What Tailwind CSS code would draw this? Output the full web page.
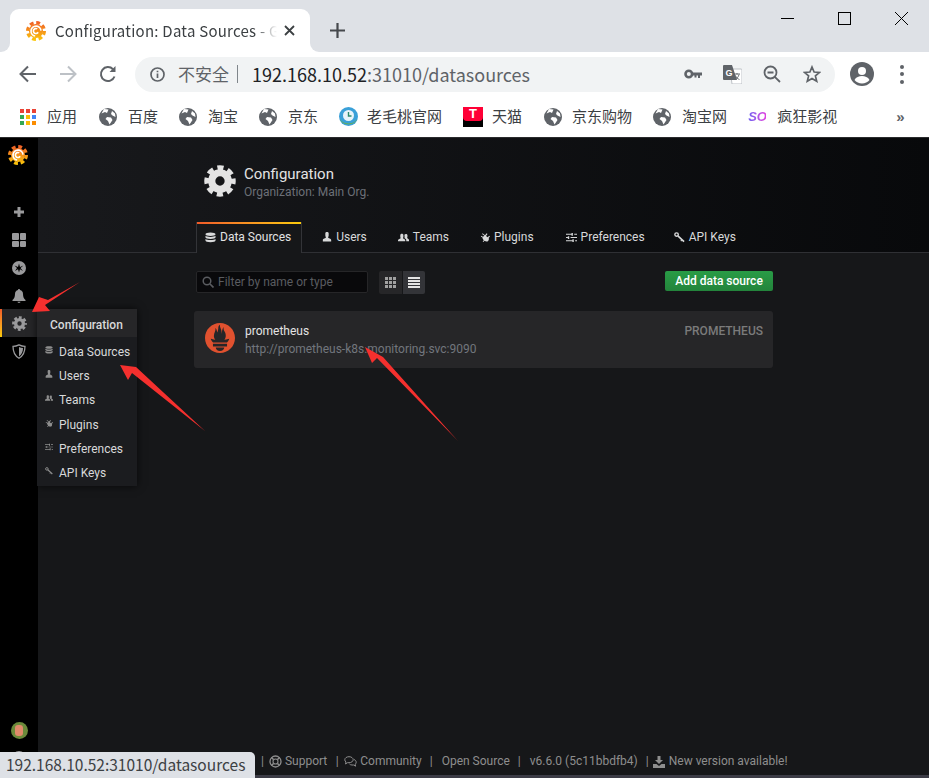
<!DOCTYPE html>
<html lang="zh-CN">
<head>
  <meta charset="UTF-8">
  <title>Configuration: Data Sources - Grafana</title>
  <script src="https://cdn.jsdelivr.net/npm/@tailwindcss/browser@4"></script>
</head>
<body class="relative h-screen overflow-hidden bg-white font-['Noto_Sans_CJK_SC',sans-serif]">
  <!-- shared icons -->
  <svg class="absolute h-0 w-0">
    <defs>
      <linearGradient id="gf" gradientUnits="userSpaceOnUse" x1="12" y1="0" x2="12" y2="24"><stop offset="0" stop-color="#f05a28"/><stop offset="1" stop-color="#fbca0a"/></linearGradient>
    </defs>
    <symbol id="grafana" viewBox="0 0 24 24">
      <circle cx="12" cy="12" r="8.5" fill="url(#gf)"/>
      <circle cx="12" cy="12" r="10" fill="none" stroke="url(#gf)" stroke-width="4" stroke-dasharray="4.6 3.25"/>
      <path d="M11 18a6 6 0 1 1 7-6.5M14.5 13.500a3 3 0 1 1-1-4" fill="none" stroke="#fff" stroke-width="2"/>
    </symbol>
    <symbol id="globe" viewBox="0 0 18 18">
      <circle cx="9" cy="9" r="9" fill="#5f6368"/>
      <path d="M2.500 5.500 6 4l2 1 1.500-3.500L5 1zM8 9l4 .5 1.500 2.500-3 4.500L9 13 6.500 11zM13 3l3 2.500.5 3.500L13.500 7.500 12 6z" fill="#fff"/>
    </symbol>
    <symbol id="gear" viewBox="0 0 24 24">
      <circle cx="12" cy="12" r="6.200" fill="none" stroke="currentColor" stroke-width="5.400"/>
      <circle cx="12" cy="12" r="9.800" fill="none" stroke="currentColor" stroke-width="4" stroke-dasharray="4.500 3.200" stroke-dashoffset="2.250"/>
    </symbol>
    <symbol id="db" viewBox="0 0 12 12">
      <path d="M6 .5c3 0 5.500.8 5.500 1.900S9 4.300 6 4.300.5 3.500.5 2.400 3 .5 6 .5zM.5 4.200C1.500 5 3.500 5.400 6 5.400s4.500-.4 5.500-1.200v1.500C11.500 6.800 9 7.600 6 7.600S.5 6.800.5 5.700zM.5 7.500C1.500 8.300 3.500 8.700 6 8.700s4.500-.4 5.500-1.200v1.700c0 1.100-2.500 1.900-5.500 1.900S.5 10.300.5 9.200z" fill="currentColor"/>
    </symbol>
    <symbol id="user" viewBox="0 0 12 12">
      <path d="M4 1.500C4 .6 5 0 6 0s2 .6 2 1.500v2.700C8 5 7.500 5.700 7.300 6.500c0 .8 3.700 1 3.700 3V11.500H1V9.500c0-2 3.700-2.200 3.700-3C4.500 5.700 4 5 4 4.200z" fill="currentColor"/>
    </symbol>
    <symbol id="users" viewBox="0 0 12 12">
      <path d="M2.500 3.500C2.500 2.700 3.200 2 4.200 2s1.700.7 1.700 1.500V5.200c0 .6-.4 1.100-.5 1.600 0 .5 2.500.8 2.500 2.200V10H0V9C0 7.600 2.900 7.300 2.900 6.800 2.800 6.300 2.500 5.800 2.500 5.200z" fill="currentColor"/>
      <path d="M7 3c.3-.5.9-.9 1.700-.9 1 0 1.600.7 1.600 1.500v1.500c0 .6-.3 1-.4 1.500 0 .5 2.100.8 2.100 2V10H9V8.800C9 7.800 8 7.200 7.200 6.900 7.100 6.500 7.200 5.800 7.200 5.200z" fill="currentColor"/>
    </symbol>
    <symbol id="plug" viewBox="0 0 12 12">
      <path d="M3 1.500l3 2.300L8 1.500l1 .8-1.800 2.400 2 1.500L11 4.500l1 .8L10.500 7c.4 2 0 3.600-1.500 4.300-1.200.5-2.400.2-3.500-.7L4 12l-.8-.7 1.400-1.500C3.500 8.700 2.900 7.500 3 6.500L1 5.500l.5-1L3.500 5.700 5.300 4.600 2.500 2.300z" fill="currentColor"/>
    </symbol>
    <symbol id="sliders" viewBox="0 0 12 12">
      <path d="M0 2h6V1h1.500v3H6V3H0zM9 2h3v1H9zM0 5.500h2V4.500h1.500v3H2v-1H0zM5 5.500h7v1H5zM0 9h7V8h1.500v3H7v-1H0zM10 9h2v1h-2z" fill="currentColor"/>
    </symbol>
    <symbol id="key" viewBox="0 0 12 12">
      <circle cx="2.800" cy="2.800" r="1.900" fill="none" stroke="currentColor" stroke-width="1.500"/>
      <path d="M4.200 4.200 11 10.500" stroke="currentColor" stroke-width="1.800"/>
      <path d="M8.500 8.500 7.500 10" stroke="currentColor" stroke-width="1.200"/>
    </symbol>
  </svg>

  <!-- chrome: tabs -->
  <div class="flex h-[52px] bg-[#dee1e6]">
    <div class="relative ml-[10px] mt-[9px] flex h-[43px] w-[300px] items-center rounded-t-[9px] bg-white pl-[16px]">
      <span class="absolute bottom-0 -left-[10px] h-[10px] w-[10px] bg-white"></span>
      <span class="absolute bottom-0 -left-[10px] h-[10px] w-[10px] rounded-br-[9px] bg-[#dee1e6]"></span>
      <span class="absolute -right-[10px] bottom-0 h-[10px] w-[10px] bg-white"></span>
      <span class="absolute -right-[10px] bottom-0 h-[10px] w-[10px] rounded-bl-[9px] bg-[#dee1e6]"></span>
      <svg class="h-[20px] w-[20px] shrink-0"><use href="#grafana"/></svg>
      <span class="ml-[9px] w-[222px] overflow-hidden whitespace-nowrap text-[15px] leading-[20px] tracking-[0.25px] text-[#3c4043] [mask-image:linear-gradient(90deg,#000_90%,transparent)]">Configuration: Data Sources - G</span>
      <svg class="ml-[7px] h-[11px] w-[11px]" viewBox="0 0 11 11"><path d="M1 1l9 9M10 1l-9 9" stroke="#3c4043" stroke-width="1.800"/></svg>
    </div>
    <svg class="ml-[20px] mt-[23px] h-[15px] w-[15px]" viewBox="0 0 15 15"><path d="M7.500 0v15M0 7.500h15" stroke="#45484c" stroke-width="2.200"/></svg>
    <div class="-mr-[1px] ml-auto flex h-[36px]">
      <div class="flex w-[57px] items-center justify-center"><span class="block h-px w-[13px] bg-black"></span></div>
      <div class="flex w-[57px] items-center justify-center"><span class="block h-[13px] w-[13px] border border-black"></span></div>
      <div class="flex w-[57px] items-center justify-center"><svg class="h-[13px] w-[13px]" viewBox="0 0 13 13"><path d="M0 0l13 13M13 0L0 13" stroke="#000"/></svg></div>
    </div>
  </div>

  <!-- chrome: toolbar -->
  <div class="flex h-[44px] items-center bg-white pl-[8px]">
    <div class="flex w-[40px] justify-center"><svg class="h-[18px] w-[18px]" viewBox="0 0 18 18"><path d="M17 9H2M9 1.500 1.500 9 9 16.500" fill="none" stroke="#5f6368" stroke-width="2"/></svg></div>
    <div class="flex w-[40px] justify-center"><svg class="h-[18px] w-[18px]" viewBox="0 0 18 18"><path d="M1 9h15M9 1.500 16.500 9 9 16.500" fill="none" stroke="#bdc1c6" stroke-width="2"/></svg></div>
    <div class="flex w-[40px] justify-center"><svg class="h-[18px] w-[18px]" viewBox="0 0 18 18"><path d="M15.500 11.500A7 7 0 1 1 14 4.200" fill="none" stroke="#5f6368" stroke-width="2"/><path d="M16.500 1v6h-6z" fill="#5f6368"/></svg></div>
    <div class="ml-[7px] flex h-[35px] w-[700px] items-center rounded-full bg-[#f1f3f4] pl-[15px]">
      <svg class="h-[15px] w-[15px] shrink-0" viewBox="0 0 15 15"><circle cx="7.500" cy="7.500" r="6.500" fill="none" stroke="#5f6368" stroke-width="1.700"/><path d="M7.500 6.500v4.500M7.500 3.800v1.500" stroke="#5f6368" stroke-width="1.700"/></svg>
      <span class="ml-[13px] text-[17px] text-[#5f6368]">不安全</span>
      <span class="ml-[8px] h-[18px] w-px bg-[#80868b]"></span>
      <span class="ml-[14px] whitespace-nowrap text-[18px] text-[#5f6368]"><span class="text-[#202124]">192.168.10.52</span>:31010/datasources</span>
      <div class="ml-auto flex items-center">
        <svg class="h-[12px] w-[18px]" viewBox="0 0 18 12"><circle cx="4.800" cy="6" r="3.300" fill="none" stroke="#5f6368" stroke-width="2.600"/><path d="M8 4.500h10v3h-2v2.500h-2V7.500h-1.500V9.500h-2V7.500H8z" fill="#5f6368"/></svg>
        <svg class="ml-[21px] h-[19px] w-[19px]" viewBox="0 0 19 19"><path d="M7 4h11a1 1 0 0 1 1 1v13a1 1 0 0 1-1 1H9z" fill="#fff" stroke="#bdc1c6"/><path d="M1 0h8l5 15H1a1 1 0 0 1-1-1V1a1 1 0 0 1 1-1z" fill="#5f6368"/><text x="2.500" y="11" font-size="9" font-weight="700" fill="#fff" font-family="Liberation Sans">G</text><path d="M11 9h6M14 8v1.500M16 9.500c-.5 2.500-2 4-4 5M12.500 10.500c.7 2 2 3.300 4 4" fill="none" stroke="#5f6368" stroke-width=".9"/></svg>
        <svg class="ml-[21px] h-[18px] w-[18px]" viewBox="0 0 18 18"><circle cx="7.500" cy="7.500" r="6" fill="none" stroke="#5f6368" stroke-width="1.800"/><path d="M11.800 11.800 17 17M4.500 7.500h6" stroke="#5f6368" stroke-width="1.800"/></svg>
        <svg class="ml-[22px] mr-[14px] h-[18px] w-[18px]" viewBox="0 0 18 18"><path d="M9 2l2.100 5 5.400.400-4.100 3.500 1.300 5.300L9 13.400 4.300 16.200l1.300-5.300L1.500 7.400 6.900 7z" fill="none" stroke="#5f6368" stroke-width="1.700"/></svg>
      </div>
    </div>
    <div class="ml-[15px] flex w-[24px] justify-center"><svg class="h-[24px] w-[24px]" viewBox="0 0 24 24"><circle cx="12" cy="12" r="12" fill="#5f6368"/><circle cx="12" cy="9" r="4" fill="#fff"/><path d="M4.500 18c1.500-3 4.500-4 7.500-4s6 1 7.500 4c-1.800 2.200-4.500 3.500-7.500 3.500S6.300 20.200 4.500 18z" fill="#fff"/></svg></div>
    <div class="ml-[20px] flex w-[16px] flex-col items-center gap-[3.500px]"><span class="h-[4px] w-[4px] rounded-full bg-[#5f6368]"></span><span class="h-[4px] w-[4px] rounded-full bg-[#5f6368]"></span><span class="h-[4px] w-[4px] rounded-full bg-[#5f6368]"></span></div>
  </div>

  <!-- chrome: bookmarks -->
  <div class="flex h-[42px] items-center gap-[21px] border-b border-[#2a2b2d] bg-white pl-[20px] text-[15px] text-[#3c4043]">
    <div class="flex items-center gap-[11px]">
      <div class="grid h-[16px] w-[16px] grid-cols-3 gap-[2px]">
        <span class="bg-[#ea4335]"></span><span class="bg-[#ea4335]"></span><span class="bg-[#ea4335]"></span>
        <span class="bg-[#34a853]"></span><span class="bg-[#fbbc05]"></span><span class="bg-[#4285f4]"></span>
        <span class="bg-[#34a853]"></span><span class="bg-[#fbbc05]"></span><span class="bg-[#fb8c00]"></span>
      </div>
      <span>应用</span>
    </div>
    <div class="ml-[1px] flex items-center gap-[11px]"><svg class="h-[18px] w-[18px]"><use href="#globe"/></svg><span>百度</span></div>
    <div class="flex items-center gap-[11px]"><svg class="h-[18px] w-[18px]"><use href="#globe"/></svg><span>淘宝</span></div>
    <div class="flex items-center gap-[11px]"><svg class="h-[18px] w-[18px]"><use href="#globe"/></svg><span>京东</span></div>
    <div class="flex items-center gap-[9px]">
      <svg class="h-[19px] w-[19px]" viewBox="0 0 19 19"><circle cx="9.500" cy="9.500" r="9.500" fill="#3aa0d8"/><path d="M1 12c3 6 14 6 17 0-2 7-15 7-17 0z" fill="#6cb33f"/><circle cx="9.500" cy="8.500" r="5.500" fill="#e8f4fa"/><path d="M9.500 5v4h3" fill="none" stroke="#2a8a6a" stroke-width="1.400"/></svg>
      <span>老毛桃官网</span>
    </div>
    <div class="flex items-center gap-[9px]">
      <div class="flex h-[20px] w-[20px] flex-col bg-black"><span class="flex h-[14px] items-center justify-center rounded-b-[4px] bg-[#ff0036] font-['Liberation_Sans',sans-serif] text-[13px] leading-none font-bold text-white">T</span></div>
      <span>天猫</span>
    </div>
    <div class="ml-[1px] flex items-center gap-[10px]"><svg class="h-[18px] w-[18px]"><use href="#globe"/></svg><span>京东购物</span></div>
    <div class="flex items-center gap-[11px]"><svg class="h-[18px] w-[18px]"><use href="#globe"/></svg><span>淘宝网</span></div>
    <div class="flex items-center gap-[11px]">
      <span class="w-[18px] bg-linear-to-r from-[#6a5cf0] to-[#e040e0] bg-clip-text font-['Liberation_Sans',sans-serif] text-[13px] font-bold text-transparent italic">SO</span>
      <span>疯狂影视</span>
    </div>
    <span class="ml-[38px] font-['Liberation_Sans',sans-serif] text-[15px] leading-none font-bold text-[#5f6368]">»</span>
  </div>

  <!-- grafana -->
  <div class="flex h-[640px] font-['Roboto',sans-serif] text-[12px]">
    <aside class="relative z-10 flex w-[38px] shrink-0 flex-col bg-black text-[#9a9a9c]">
      <div class="flex h-[60px] justify-center pt-[7px] pr-[2px]"><svg class="h-[20px] w-[20px]"><use href="#grafana"/></svg></div>
      <div class="flex h-[28px] items-center justify-center"><svg class="h-[12px] w-[12px]" viewBox="0 0 12 12"><path d="M6 1v10M1 6h10" stroke="currentColor" stroke-width="3"/></svg></div>
      <div class="flex h-[28px] items-center justify-center"><div class="grid h-[14px] w-[14px] grid-cols-2 gap-[1px]"><span class="rounded-[1px] bg-current"></span><span class="rounded-[1px] bg-current"></span><span class="rounded-[1px] bg-current"></span><span class="rounded-[1px] bg-current"></span></div></div>
      <div class="flex h-[28px] items-center justify-center"><svg class="h-[14px] w-[14px]" viewBox="0 0 14 14"><circle cx="7" cy="7" r="7" fill="currentColor"/><path d="M7 2.500 8 6l3.500-1.500L8.500 7l2.500 3L8 8.300 7 11.500 6 8.300 3 10l2-3L2.500 4.500 6 6z" fill="#000"/></svg></div>
      <div class="flex h-[28px] items-center justify-center"><svg class="h-[14px] w-[14px]" viewBox="0 0 14 14"><path d="M7 0c.7 0 1 .5 1 1 2 .5 3 2 3 4 0 3 1 5 2.500 6v1H.5v-1C2 10 3 8 3 5c0-2 1-3.500 3-4 0-.5.300-1 1-1zM5.500 12.800h3C8.500 13.500 7.800 14 7 14s-1.500-.5-1.500-1.200z" fill="currentColor"/></svg></div>
      <div class="relative -mt-[1px] flex h-[28px] items-center justify-center bg-[#262628]">
        <span class="absolute inset-y-0 left-0 w-[2px] bg-linear-to-b from-[#f05a28] to-[#fbca0a]"></span>
        <svg class="h-[15px] w-[15px]"><use href="#gear"/></svg>
        <!-- flyout -->
        <div class="absolute top-0 left-[37px] w-[100px] bg-[#1b1c1f] pb-[1px] text-[#d8d9da] shadow-[0_0_8px_rgba(0,0,0,.7)]">
          <div class="flex h-[28px] items-center bg-[#262628] pl-[13px] pt-[3px] font-medium">Configuration</div>
          <div class="mt-[2.500px] flex h-[24.300px] items-center pl-[8px]"><svg class="mb-[4px] h-[8px] w-[8px] text-[#8e8e8e]"><use href="#db"/></svg><span class="ml-[6px]">Data Sources</span></div>
          <div class="flex h-[24.300px] items-center pl-[8px]"><svg class="mb-[4px] h-[8px] w-[8px] text-[#8e8e8e]"><use href="#user"/></svg><span class="ml-[6px]">Users</span></div>
          <div class="flex h-[24.300px] items-center pl-[8px]"><svg class="mb-[4px] h-[8px] w-[8px] text-[#8e8e8e]"><use href="#users"/></svg><span class="ml-[6px]">Teams</span></div>
          <div class="flex h-[24.300px] items-center pl-[8px]"><svg class="mb-[4px] h-[8px] w-[8px] text-[#8e8e8e]"><use href="#plug"/></svg><span class="ml-[6px]">Plugins</span></div>
          <div class="flex h-[24.300px] items-center pl-[8px]"><svg class="mb-[4px] h-[8px] w-[8px] text-[#8e8e8e]"><use href="#sliders"/></svg><span class="ml-[6px]">Preferences</span></div>
          <div class="flex h-[24.300px] items-center pl-[8px]"><svg class="mb-[4px] h-[8px] w-[8px] text-[#8e8e8e]"><use href="#key"/></svg><span class="ml-[6px]">API Keys</span></div>
        </div>
      </div>
      <div class="flex h-[28px] items-center justify-center"><svg class="h-[15px] w-[14px]" viewBox="0 0 14 15"><path d="M7 .8C9 1.800 11 2.300 13 2.300c0 5-1.500 9.500-6 11.900C2.500 11.800 1 7.300 1 2.300c2 0 4-.5 6-1.500z" fill="none" stroke="currentColor" stroke-width="1.300"/><path d="M7 3c1.300.6 2.600 1 4 1.100 0 3.500-1.200 6.500-4 8.300z" fill="currentColor"/></svg></div>
      <div class="mt-auto flex justify-center">
        <div class="flex h-[17px] w-[17px] items-center justify-center overflow-hidden rounded-full bg-[#6b8a3a]"><span class="block h-[11px] w-[8px] rounded-[3px] bg-[#e08a6a]"></span></div>
      </div>
      <div class="mt-[12px] mb-[13px] flex justify-center"><span class="block h-[14px] w-[14px] rounded-full bg-[#9a9a9c]"></span></div>
    </aside>

    <main class="flex min-w-0 flex-1 flex-col bg-[#161719]">
      <header class="h-[115px] shrink-0 border-b border-[#2f3034] bg-linear-to-r from-[#18191c] to-[#08090b] pl-[158px]">
        <div class="flex h-[84px] items-center pt-[2px] pl-[8px]">
          <svg class="h-[32px] w-[32px] text-[#e3e3e3]"><use href="#gear"/></svg>
          <div class="ml-[8px] mt-[1px]">
            <h1 class="text-[15px] leading-[20px] text-[#e3e3e3]">Configuration</h1>
            <p class="mt-[1px] text-[12px] leading-[14px] text-[#6c7077]">Organization: Main Org.</p>
          </div>
        </div>
        <nav class="flex h-[31px] items-stretch">
          <a class="flex items-center gap-[4px] border-x border-[#333438] bg-[#161719] bg-linear-to-r from-[#f05a28] to-[#fbca0a] bg-size-[100%_2px] bg-no-repeat pr-[10px] pb-[1px] pl-[8px] text-[#e3e3e3]"><svg class="h-[11px] w-[11px] text-[#d8d9da]"><use href="#db"/></svg>Data Sources</a>
          <a class="ml-[11px] flex items-center gap-[4px] px-[9px] pb-[1px] text-[#d8d9da]"><svg class="h-[10px] w-[10px]"><use href="#user"/></svg>Users</a>
          <a class="ml-[13px] flex items-center gap-[4px] px-[9px] pb-[1px] text-[#d8d9da]"><svg class="h-[11px] w-[11px]"><use href="#users"/></svg>Teams</a>
          <a class="ml-[13px] flex items-center gap-[4px] px-[9px] pb-[1px] text-[#d8d9da]"><svg class="h-[10px] w-[10px]"><use href="#plug"/></svg>Plugins</a>
          <a class="ml-[14px] flex items-center gap-[4px] px-[9px] pb-[1px] text-[#d8d9da]"><svg class="h-[11px] w-[11px]"><use href="#sliders"/></svg>Preferences</a>
          <a class="ml-[11px] flex items-center gap-[4px] px-[9px] pb-[1px] text-[#d8d9da]"><svg class="h-[11px] w-[11px]"><use href="#key"/></svg>API Keys</a>
        </nav>
      </header>

      <div class="flex-1 pr-[156px] pl-[158px]">
        <div class="mt-[18px] flex items-start">
          <div class="flex h-[22px] w-[172px] items-center rounded-[2px] border border-[#262628] bg-[#09090b] pl-[5px] text-[#5a5c60]">
            <svg class="h-[12px] w-[12px]" viewBox="0 0 12 12"><circle cx="5" cy="5" r="3.800" fill="none" stroke="#5a5c60" stroke-width="1.500"/><path d="M8 8l3.500 3.500" stroke="#5a5c60" stroke-width="1.700"/></svg>
            <span class="ml-[4px]">Filter by name or type</span>
          </div>
          <div class="ml-[11px] flex h-[23px] overflow-hidden rounded-[2px]">
            <div class="flex w-[23px] items-center justify-center bg-[#262628]"><div class="grid h-[11px] w-[12px] grid-cols-3 gap-px"><span class="bg-[#a0a0a0]"></span><span class="bg-[#a0a0a0]"></span><span class="bg-[#a0a0a0]"></span><span class="bg-[#a0a0a0]"></span><span class="bg-[#a0a0a0]"></span><span class="bg-[#a0a0a0]"></span><span class="bg-[#a0a0a0]"></span><span class="bg-[#a0a0a0]"></span><span class="bg-[#a0a0a0]"></span></div></div>
            <div class="ml-px flex w-[22px] items-center justify-center bg-[#333438]"><div class="flex h-[11px] w-[12px] flex-col gap-px"><span class="flex-1 bg-[#e3e3e3]"></span><span class="flex-1 bg-[#e3e3e3]"></span><span class="flex-1 bg-[#e3e3e3]"></span><span class="flex-1 bg-[#e3e3e3]"></span></div></div>
          </div>
          <button class="ml-auto h-[20px] w-[108px] rounded-[2px] bg-linear-to-b from-[#299c46] to-[#23843b] text-center text-[12px] leading-[20px] font-medium text-white">Add data source</button>
        </div>
        <div class="-ml-[2px] mt-[17px] flex h-[57px] rounded-[3px] bg-[#262628] pt-[12px] pr-[10px] pl-[11px]">
          <svg class="h-[30px] w-[30px]" viewBox="0 0 24 24"><path fill="#e0512f" d="M12 0C5.373 0 0 5.372 0 11.999c0 6.627 5.373 12 12 12s12-5.373 12-12S18.627 0 12 0zm0 22.459c-1.885 0-3.414-1.259-3.414-2.812h6.828c0 1.553-1.529 2.812-3.414 2.812zm5.64-3.745H6.36V16.666h11.28v2.048zm-.041-3.102H6.391c-.037-.043-.075-.086-.111-.13-1.155-1.401-1.427-2.133-1.691-2.879-.004-.025 1.401.287 2.397.511 0 0 .513.119 1.262.255-.72-.843-1.147-1.915-1.147-3.011 0-2.406 1.845-4.508 1.179-6.207.648.053 1.342 1.369 1.389 3.428.689-.951.977-2.688.977-3.754 0-1.103.727-2.385 1.454-2.429-.648 1.069.168 1.984.894 4.256.272.854.237 2.288.447 3.199.07-1.892.395-4.652 1.595-5.605-.529 1.2.079 2.702.494 3.424.671 1.164 1.078 2.047 1.078 3.717 0 1.12-.414 2.173-1.11 3.003.792-.148 1.337-.283 1.337-.283l2.57-.502s-.373 1.536-1.808 3.007z"/></svg>
          <div class="ml-[10px] mt-[1px] flex-1">
            <div class="text-[12px] leading-[15px] text-[#e3e3e3]">prometheus</div>
            <div class="mt-[3px] text-[12px] leading-[15px] text-[#72767d]">http://prometheus-k8s.monitoring.svc:9090</div>
          </div>
          <div class="mt-[1px] text-[12px] leading-[15px] font-medium text-[#7b7b7b]">PROMETHEUS</div>
        </div>
      </div>

      <footer class="flex h-[37px] shrink-0 items-start whitespace-nowrap pl-[223px] pt-[16px] leading-[15px] text-[#8e8e8e]">
        <span>|</span>
        <span class="ml-[5px] flex items-center gap-[3px]"><svg class="h-[13px] w-[13px]" viewBox="0 0 13 13"><circle cx="6.500" cy="6.500" r="5.500" fill="none" stroke="currentColor" stroke-width="1.300"/><circle cx="6.500" cy="6.500" r="2.500" fill="none" stroke="currentColor" stroke-width="1.100"/><path d="M2.500 2.500l2 2M10.500 2.500l-2 2M2.500 10.500l2-2M10.500 10.500l-2-2" stroke="currentColor" stroke-width="1.500"/></svg>Support</span>
        <span class="ml-[8.500px]">|</span>
        <span class="ml-[5.500px] flex items-center gap-[3px]"><svg class="h-[11px] w-[13px]" viewBox="0 0 13 11"><path d="M5 .7c2.300 0 4.200 1.300 4.200 3S7.300 6.700 5 6.700H3.500L1.500 8l.5-2C1.200 5.500.8 4.600.8 3.700.8 2 2.700.7 5 .7z" fill="none" stroke="currentColor"/><path d="M10 3.500c1.300.5 2.200 1.500 2.200 2.700 0 .8-.4 1.500-1 2l.4 2-2-1.200H8c-1 0-2-.4-2.500-1" fill="none" stroke="currentColor"/></svg>Community</span>
        <span class="ml-[8px]">|</span>
        <span class="ml-[9px]">Open Source</span>
        <span class="ml-[8px]">|</span>
        <span class="ml-[9px]">v6.6.0 (5c11bbdfb4)</span>
        <span class="ml-[8px]">|</span>
        <span class="ml-[4px] flex items-center gap-[4px]"><svg class="h-[12px] w-[12px]" viewBox="0 0 12 12"><path d="M4.500 0h3v4H10L6 8 2 4h2.500zM0 8h3.500L6 10l2.500-2H12v4H0z" fill="currentColor"/></svg>New version available!</span>
      </footer>
      <div class="h-[3px] shrink-0 bg-[#3c3c46]"></div>
    </main>
  </div>

  <!-- status bubble -->
  <div class="absolute bottom-0 left-0 z-20 flex h-[26px] w-[255px] items-center rounded-tr-[5px] bg-[#dee1e6] pl-[6px] font-['Noto_Sans_CJK_SC',sans-serif] text-[15.500px] text-[#3c4043]">192.168.10.52:31010/datasources</div>

  <!-- red annotation arrows -->
  <svg class="pointer-events-none absolute inset-0 z-30 h-full w-full" viewBox="0 0 929 778">
    <polygon fill="#f5302e" points="80,282 48,300 39,297 32,312 50,311 45,305"/>
    <polygon fill="#f5302e" points="205,431 136,367 120,365 128,380 132,373"/>
    <polygon fill="#f5302e" points="458,441 383,357 365,347 372,363 377,358"/>
  </svg>
</body>
</html>
